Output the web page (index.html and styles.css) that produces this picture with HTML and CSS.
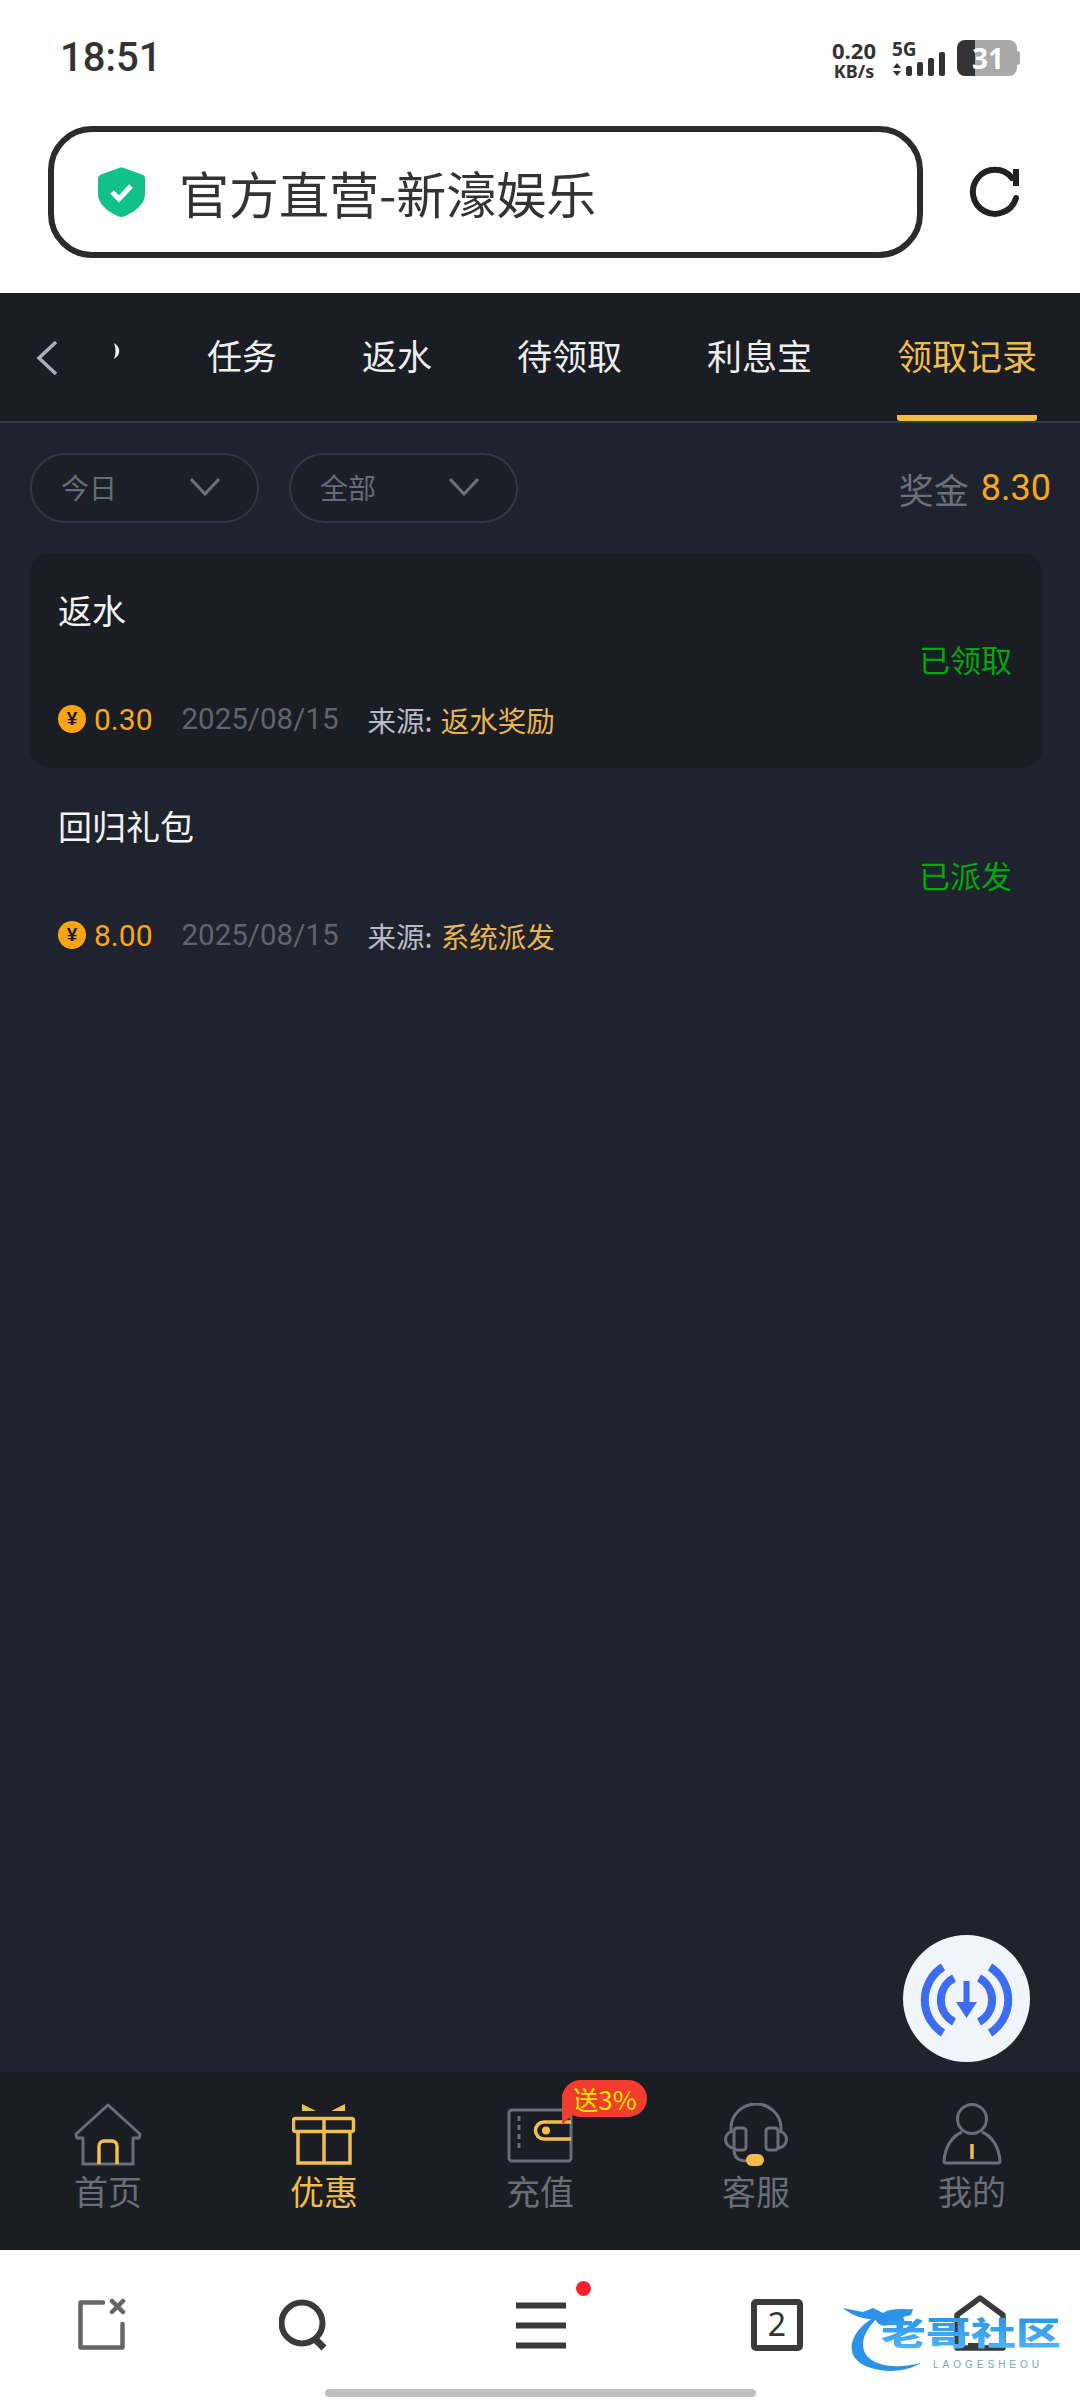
FILE: index.html
```html
<!DOCTYPE html>
<html lang="zh-CN">
<head>
  <meta charset="UTF-8" />
  <meta name="viewport" content="width=device-width, initial-scale=1" />
  <title>领取记录</title>
  <link rel="stylesheet" href="styles.css">
</head>
<body>

<div class="statusbar">
  <span class="clock">18:51</span>
  <div class="status-right">
    <div class="speed"><span>0.20</span><span class="speed-unit">KB/s</span></div>
    <div class="signal">
      <span class="signal-type">5G</span>
      <svg class="signal-bars" width="54" height="26" viewBox="0 0 54 26">
        <path d="M5 11l4 5H1zM5 24l4-5H1z" fill="#333"/>
        <rect x="14" y="14" width="6" height="10" rx="2" fill="#333"/>
        <rect x="25" y="10" width="6" height="14" rx="2" fill="#333"/>
        <rect x="36" y="6" width="6" height="18" rx="2" fill="#333"/>
        <rect x="47" y="0" width="6" height="24" rx="2" fill="#333"/>
      </svg>
    </div>
    <div class="battery">31</div>
  </div>
</div>

<div class="addressbar">
  <div class="urlbox">
    <svg width="47" height="50" viewBox="0 0 47 50">
      <path d="M21 1 3 7.500C1 8.200 0 9.500 0 11.500V27C0 38 12 46 21 49.500c1.600.6 3.400.6 5 0C35 46 47 38 47 27V11.500c0-2-1-3.300-3-4L26 1c-1.600-.6-3.400-.6-5 0z" fill="#12c08a"/>
      <path d="M14 25l7 7 12-13" fill="none" stroke="#fff" stroke-width="5"/>
    </svg>
    <span class="urltext">官方直营-新濠娱乐</span>
  </div>
  <svg class="reload" width="52" height="52" viewBox="0 0 52 52">
    <path d="M47 32A22 22 0 1 1 43 12" fill="none" stroke="#222" stroke-width="6" stroke-linecap="round"/>
    <path d="M47 3V20" fill="none" stroke="#222" stroke-width="6"/>
  </svg>
</div>

<div class="page">
  <div class="tabbar">
    <svg class="back" width="22" height="36" viewBox="0 0 22 36">
      <path d="M20 2 3 18l17 16" fill="none" stroke="#a9aeb8" stroke-width="3.500"/>
    </svg>
    <svg class="tab-sliver" width="8" height="16" viewBox="0 0 8 16">
      <path d="M1 0C8 4 8 12 1 16 3 11 3 5 1 0z" fill="#eee"/>
    </svg>
    <div class="tabs">
      <span class="tab">任务</span>
      <span class="tab">返水</span>
      <span class="tab">待领取</span>
      <span class="tab">利息宝</span>
      <span class="tab tab-active">领取记录</span>
    </div>
  </div>

  <div class="filters">
    <div class="pill">今日
      <svg width="30" height="18" viewBox="0 0 30 18"><path d="M1 1l14 15L29 1" fill="none" stroke="#6a6f7a" stroke-width="3"/></svg>
    </div>
    <div class="pill">全部
      <svg width="30" height="18" viewBox="0 0 30 18"><path d="M1 1l14 15L29 1" fill="none" stroke="#6a6f7a" stroke-width="3"/></svg>
    </div>
    <div class="bonus">奖金 <span class="bonus-num">8.30</span></div>
  </div>

  <div class="records">
    <div class="record record-dark">
      <div class="record-title">返水</div>
      <div class="record-state">已领取</div>
      <div class="record-meta">
        <span class="coin">¥</span>
        <span class="amount">0.30</span>
        <span class="date">2025/08/15</span>
        <span class="source">来源: <em>返水奖励</em></span>
      </div>
    </div>
    <div class="record">
      <div class="record-title">回归礼包</div>
      <div class="record-state">已派发</div>
      <div class="record-meta">
        <span class="coin">¥</span>
        <span class="amount">8.00</span>
        <span class="date">2025/08/15</span>
        <span class="source">来源: <em>系统派发</em></span>
      </div>
    </div>
  </div>

  <div class="fab">
    <svg width="127" height="127" viewBox="0 0 127 127">
      <g fill="none" stroke="#3b6cf2" stroke-width="8">
        <path d="M40 32A39 39 0 0 0 40 98"/>
        <path d="M87 32A39 39 0 0 1 87 98"/>
        <path d="M51 43A25 25 0 0 0 51 87"/>
        <path d="M76 43A25 25 0 0 1 76 87"/>
      </g>
      <rect x="60.500" y="46" width="6" height="24" fill="#3b6cf2"/>
      <path d="M53 67h21L63.500 83z" fill="#3b6cf2"/>
    </svg>
  </div>
</div>

<nav class="bottomnav">
  <div class="navitem">
    <svg width="68" height="64" viewBox="0 0 68 64">
      <path d="M34 2 2 31l1 4h6v26h50V35h6l1-4z" fill="none" stroke="#6a6e78" stroke-width="3" stroke-linejoin="round"/>
      <path d="M25 61V43a5 5 0 0 1 5-5h8a5 5 0 0 1 5 5v18" fill="none" stroke="#f2bd4b" stroke-width="3.500"/>
    </svg>
    <span>首页</span>
  </div>
  <div class="navitem navitem-active">
    <svg width="64" height="64" viewBox="0 0 64 64">
      <path d="M10 1l14 7H10zM53 1 39 8h14z" fill="#f2bd4b"/>
      <g fill="none" stroke="#f2bd4b" stroke-width="3.500">
        <rect x="1.500" y="15.500" width="60" height="13" rx="2"/>
        <path d="M6 28v32h52V28M32 15v45"/>
      </g>
    </svg>
    <span>优惠</span>
  </div>
  <div class="navitem">
    <div class="gift-badge">送3%</div>
    <svg width="66" height="64" viewBox="0 0 66 64">
      <rect x="2" y="7" width="62" height="51" rx="3" fill="none" stroke="#6a6e78" stroke-width="3"/>
      <path d="M12 13v34" stroke="#6a6e78" stroke-width="3" stroke-dasharray="5 4"/>
      <path d="M64 19H37a8.500 8.500 0 0 0 0 17h27" fill="none" stroke="#f2bd4b" stroke-width="3.500"/>
      <circle cx="39" cy="27.500" r="4" fill="#f2bd4b"/>
    </svg>
    <span>充值</span>
  </div>
  <div class="navitem">
    <svg width="66" height="64" viewBox="0 0 66 64">
      <g fill="none" stroke="#6a6e78" stroke-width="3">
        <path d="M8 28V25a25 24 0 0 1 50 0v3"/>
        <rect x="11" y="25" width="12" height="22" rx="3"/>
        <rect x="43" y="25" width="12" height="22" rx="3"/>
        <path d="M11 28a8.500 8.500 0 0 0 0 17M55 28a8.500 8.500 0 0 1 0 17"/>
        <path d="M11 47c0 8 5 11 13 11"/>
      </g>
      <rect x="23" y="51" width="18" height="12" rx="6" fill="#f2bd4b"/>
    </svg>
    <span>客服</span>
  </div>
  <div class="navitem">
    <svg width="60" height="64" viewBox="0 0 60 64">
      <g fill="none" stroke="#6a6e78" stroke-width="3">
        <circle cx="30" cy="16" r="14.500"/>
        <path d="M20 29C10 33 3 44 2 58a2 2 0 0 0 2 2h52a2 2 0 0 0 2-2C57 44 50 33 40 29"/>
      </g>
      <path d="M30 41v15" stroke="#f2bd4b" stroke-width="3.500"/>
    </svg>
    <span>我的</span>
  </div>
</nav>

<div class="toolbar">
  <div class="tools">
    <svg class="tool" width="48" height="60" viewBox="0 0 48 60">
      <g fill="none" stroke="#666" stroke-width="4.500" stroke-linecap="round" stroke-linejoin="round">
        <path d="M25 7.500H2.500v45h42V29"/>
        <path d="M34 6l11 11M45 6 34 17"/>
      </g>
    </svg>
    <svg class="tool tool-search" width="50" height="60" viewBox="0 0 50 60">
      <circle cx="23" cy="28" r="20.500" fill="none" stroke="#3a3a3a" stroke-width="6"/>
      <path d="M36 44l9 9" stroke="#3a3a3a" stroke-width="7"/>
    </svg>
    <div class="tool tool-menu">
      <span class="menu-dot"></span>
      <svg width="50" height="60" viewBox="0 0 50 60">
        <path d="M0 10.500h50M0 30.500h50M0 50.500h50" stroke="#3a3a3a" stroke-width="6"/>
      </svg>
    </div>
    <div class="tool tool-count">2</div>
    <svg class="tool tool-home" width="52" height="60" viewBox="0 0 52 60">
      <path d="M3 53V20L26 3l23 17v33z" fill="none" stroke="#3a3a3a" stroke-width="5.500" stroke-linejoin="round"/>
      <rect x="14" y="48" width="15" height="5" fill="#3a3a3a"/>
    </svg>
  </div>
  <div class="gesture"></div>

  <div class="watermark">
    <svg width="90" height="68" viewBox="0 0 90 68">
      <path d="M40 8C10 20-5 50 25 62c20 7 40 4 53-4-23 6-48 4-56-10-7-15 6-30 18-40z" fill="#2a93e8"/>
      <path d="M0 3l20 4 10-4 10 5c10-6 20-3 30-4l-2 6-8 2 2 6-17 2c-5 2-10 0-13-6C25 15 10 12 0 3z" fill="#2a93e8"/>
    </svg>
    <div class="wm-name">老哥社区</div>
    <div class="wm-sub">LAOGESHEOU</div>
  </div>
</div>

</body>
</html>
```

FILE: styles.css
```css
* { box-sizing: border-box; }
html, body { margin: 0; padding: 0; }
body {
  width: 1080px;
  height: 2400px;
  display: flex;
  flex-direction: column;
  overflow: hidden;
  background: #fff;
  font-family: "Noto Sans CJK SC", "Noto Sans", sans-serif;
}
svg { display: block; flex-shrink: 0; }

/* status bar */
.statusbar {
  height: 126px;
  flex-shrink: 0;
  display: flex;
  justify-content: space-between;
  align-items: flex-start;
  padding: 36px 63px 0 60px;
}
.clock {
  font-family: Roboto, sans-serif;
  font-weight: 500;
  font-size: 40px;
  line-height: 44px;
  color: #333;
}
.status-right {
  display: flex;
  align-items: flex-start;
  padding-top: 4px;
}
.speed {
  width: 46px;
  display: flex;
  flex-direction: column;
  align-items: center;
  font-family: "Noto Sans", sans-serif;
  font-weight: 700;
  font-size: 22px;
  line-height: 20px;
  color: #333;
}
.speed-unit { font-size: 18px; line-height: 19px; margin-top: 2px; white-space: nowrap; }
.signal { margin-left: 15px; width: 54px; }
.signal-type {
  display: block;
  font-family: "Noto Sans", sans-serif;
  font-weight: 700;
  font-size: 19px;
  line-height: 19px;
  color: #333;
}
.signal-bars { margin-top: -7px; }
.battery {
  position: relative;
  width: 60px;
  height: 36px;
  margin-left: 11px;
  border-radius: 8px;
  background: linear-gradient(90deg, #333 18px, #a9a9a9 18px);
  color: #fff;
  font-family: "Noto Sans", sans-serif;
  font-weight: 700;
  font-size: 28px;
  line-height: 36px;
  padding-left: 15px;
}
.battery::after {
  content: "";
  position: absolute;
  right: -3px;
  top: 11px;
  width: 3px;
  height: 14px;
  border-radius: 0 3px 3px 0;
  background: #a9a9a9;
}

/* address bar */
.addressbar {
  height: 167px;
  flex-shrink: 0;
  display: flex;
  align-items: flex-start;
  padding-left: 48px;
}
.urlbox {
  width: 875px;
  height: 132px;
  border: 6px solid #2b2b2b;
  border-radius: 44px;
  display: flex;
  align-items: center;
  padding-left: 44px;
  gap: 34px;
}
.urltext { font-size: 50px; line-height: 60px; color: #333; white-space: nowrap; }
.reload { margin: 40px 0 0 46px; }

/* page */
.page {
  position: relative;
  flex: 1;
  background: #1f232d;
  min-height: 0;
}
.tabbar {
  height: 130px;
  display: flex;
  background: #1b1d24;
  border-bottom: 2px solid #343a46;
}
.back { margin: 47px 0 0 36px; }
.tab-sliver { margin: 50px 0 0 55px; }
.tabs {
  margin-left: 86px;
  height: 128px;
  display: flex;
  gap: 85px;
}
.tab {
  flex-shrink: 0;
  font-size: 35px;
  line-height: 50px;
  height: 128px;
  padding-top: 37px;
  color: #eee;
  white-space: nowrap;
}
.tab-active {
  color: #f2bd4b;
  border-bottom: 6px solid #f2bd4b;
  border-radius: 0 0 3px 3px;
}

.filters {
  display: flex;
  align-items: center;
  gap: 30px;
  padding: 30px 29px 0 30px;
}
.pill {
  width: 229px;
  height: 70px;
  border: 2px solid #323743;
  border-radius: 35px;
  background: #1c1f27;
  display: flex;
  align-items: center;
  justify-content: space-between;
  padding: 0 37px 2px 29px;
  font-size: 28px;
  color: #666c77;
}
.bonus {
  margin-left: auto;
  font-size: 35px;
  color: #6b7079;
  display: flex;
  align-items: center;
  gap: 12px;
}
.bonus-num { color: #f9a818; font-family: Roboto, sans-serif; font-size: 36px; }

/* records */
.records {
  margin: 30px 38px 0 30px;
  display: flex;
  flex-direction: column;
  gap: 1px;
}
.record { height: 215px; padding: 33px 30px 0 28px; border-radius: 20px; }
.record-dark { background: #1b1d24; }
.record-title { font-size: 34px; line-height: 48px; color: #f2f2f2; }
.record-state {
  margin-top: 3px;
  text-align: right;
  font-size: 31px;
  line-height: 44px;
  color: #00a80c;
}
.record-meta {
  margin-top: 16px;
  display: flex;
  align-items: center;
  height: 44px;
  font-size: 30px;
}
.coin {
  width: 28px;
  height: 28px;
  border-radius: 50%;
  background: #fca311;
  color: #1b1d24;
  font-family: "Liberation Sans", sans-serif;
  font-weight: 700;
  font-size: 19px;
  line-height: 28px;
  text-align: center;
}
.amount { margin-left: 8px; font-family: Roboto, sans-serif; font-size: 30px; color: #f9a818; }
.date { margin-left: 29px; font-family: Roboto, sans-serif; color: #60646f; font-size: 29.5px; }
.source { margin-left: 29px; color: #b8bcc4; font-size: 28.5px; }
.source em { font-style: normal; color: #e8b552; margin-left: 2px; }

.fab {
  position: absolute;
  left: 903px;
  bottom: 10px;
  width: 127px;
  height: 127px;
  border-radius: 50%;
  background: #f0f4fb;
}

/* bottom nav */
.bottomnav {
  height: 178px;
  flex-shrink: 0;
  display: grid;
  grid-template-columns: repeat(5, 216px);
  background: #1b1d24;
}
.navitem {
  position: relative;
  display: flex;
  flex-direction: column;
  align-items: center;
  padding-top: 31px;
  font-size: 34px;
  line-height: 44px;
  color: #6a6e78;
}
.navitem span { margin-top: 2px; }
.navitem-active { color: #f2bd4b; }
.gift-badge {
  position: absolute;
  left: 130px;
  top: 8px;
  width: 85px;
  height: 37px;
  border-radius: 19px;
  background: #f23c2e;
  color: #ffe600;
  font-size: 26px;
  line-height: 37px;
  text-align: center;
  z-index: 1;
}
.gift-badge::after {
  content: "";
  position: absolute;
  left: 0;
  top: 14px;
  width: 14px;
  height: 31px;
  background: #f23c2e;
  clip-path: polygon(0 0, 100% 0, 100% 55%, 0 100%);
}

/* browser toolbar */
.toolbar {
  position: relative;
  height: 150px;
  flex-shrink: 0;
  background: #fff;
  padding-top: 45px;
}
.tools { display: flex; padding-left: 78px; height: 60px; }
.tool-search { margin-left: 153px; }
.tool-menu { position: relative; margin-left: 187px; width: 50px; }
.menu-dot {
  position: absolute;
  left: 60px;
  top: -14px;
  width: 15px;
  height: 15px;
  border-radius: 50%;
  background: #f5222d;
}
.tool-count {
  margin: 4px 0 0 185px;
  width: 52px;
  height: 52px;
  border: 6px solid #3a3a3a;
  border-radius: 5px;
  font-family: "Noto Sans", sans-serif;
  font-size: 32px;
  line-height: 38px;
  text-align: center;
  color: #333;
}
.tool-home { margin-left: 151px; }
.gesture {
  width: 431px;
  height: 8px;
  margin: 34px auto 0 auto;
  border-radius: 4px;
  background: #c0c0c0;
}
.watermark {
  position: absolute;
  left: 843px;
  top: 55px;
  width: 222px;
  height: 68px;
}
.wm-name {
  position: absolute;
  left: 38px;
  top: -4px;
  width: 184px;
  font-size: 45px;
  line-height: 60px;
  font-weight: 900;
  white-space: nowrap;
  transform: scaleY(0.72);
  background: linear-gradient(#1f8fe8, #56b6f5);
  -webkit-background-clip: text;
  background-clip: text;
  color: transparent;
}
.wm-sub {
  position: absolute;
  left: 90px;
  top: 55px;
  font-family: "Liberation Sans", sans-serif;
  font-size: 10px;
  line-height: 10px;
  letter-spacing: 4px;
  color: #6aa6dc;
  white-space: nowrap;
}
```
